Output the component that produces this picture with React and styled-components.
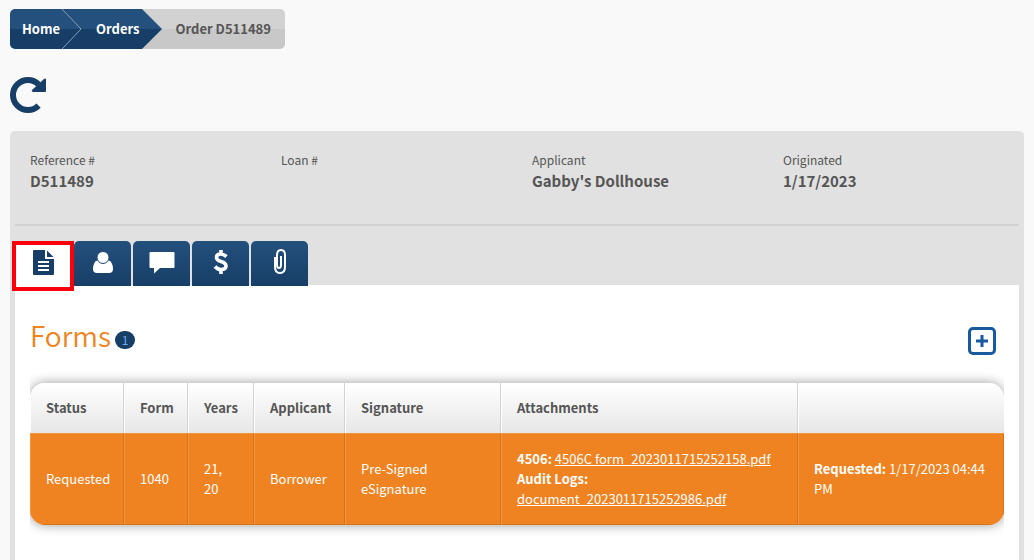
import * as React from 'react';
import styled, {createGlobalStyle} from 'styled-components';

const NAVY = '#173e66';
const ORANGE = '#ef8321';

const tabs = [
    {
        id: 'forms',
        label: 'Forms',
        icon: <path fillRule="evenodd" d="M5 1h11v9h9v15q0 1-1 1H5q-1 0-1-1V2q0-1 1-1zM18 1.500l6.500 6.500h-6.500zM9 12v2h11v-2zM9 16v2h11v-2zM9 20v2h11v-2z"/>,
    },
    {
        id: 'applicant',
        label: 'Applicant',
        icon: (
            <>
                <path d="M9 11h10q5 2 5 9q0 4-4 4H8q-4 0-4-4q0-7 5-9z"/>
                <circle cx="14" cy="8.500" r="6" stroke="#1e4973"/>
            </>
        ),
    },
    {
        id: 'comments',
        label: 'Comments',
        icon: <path d="M2.500 3h23q1 0 1 1v14q0 1-1 1H12l-6 5.500V19H2.500q-1 0-1-1V4q0-1 1-1z"/>,
    },
    {
        id: 'billing',
        label: 'Billing',
        icon: <path fill="none" stroke="currentColor" strokeWidth="3.600" d="M19.500 7.500q-3-2.500-6-2.500q-4 0-4 3.500q0 2.500 4.500 4q5 1.500 5 4.500q0 3.500-5 3.500q-3.500 0-6-3M14 1v4M14 20v5"/>,
    },
    {
        id: 'files',
        label: 'Files',
        icon: <path fill="none" stroke="currentColor" strokeWidth="2" d="M9 8v10q0 6 5 6t5-6V6q0-5-4-5t-4 5v10q0 3 2 3t2-3V7"/>,
    },
];

const details = [
    {label: 'Reference #', value: 'D511489'},
    {label: 'Loan #', value: ''},
    {label: 'Applicant', value: 'Gabby\'s Dollhouse'},
    {label: 'Originated', value: '1/17/2023'},
];

const columns = [
    {title: 'Status', width: 94},
    {title: 'Form', width: 64},
    {title: 'Years', width: 66},
    {title: 'Applicant', width: 91},
    {title: 'Signature', width: 156},
    {title: 'Attachments', width: 297},
    {title: '', width: 206},
];

const App = () => {

    const [activeTab, setActiveTab] = React.useState('forms');

    return (
        <Page>
            <GlobalStyle/>
            <Breadcrumbs aria-label="Breadcrumb">
                <Crumb href="#home">Home</Crumb>
                <Divider viewBox="0 0 20 40" aria-hidden="true">
                    <path d="M0 0L19 20L0 40" fill="none" stroke="#8b9fb3"/>
                </Divider>
                <Crumb href="#orders">Orders</Crumb>
                <Divider viewBox="0 0 20 40" aria-hidden="true">
                    <path d="M0 0H20V20z" fill="#d2d2d2"/>
                    <path d="M20 20V40H0z" fill="#c8c8c8"/>
                </Divider>
                <Current aria-current="page">Order D511489</Current>
            </Breadcrumbs>

            <Refresh type="button" aria-label="Refresh">
                <svg width="38" height="38" viewBox="0 0 38 38" aria-hidden="true">
                    <path d="M28.600 29.600A15 15 0 1 1 28.600 8.400" fill="none" stroke="currentColor" strokeWidth="6"/>
                    <path d="M36 3v12q0 1-1 1H23q-2-1-1-2L34 3q1-1 2 0z" fill="currentColor"/>
                </svg>
            </Refresh>

            <Panel>
                <Details>
                    {details.map(({label, value}) => (
                        <Detail key={label}>
                            <Label>{label}</Label>
                            <Value>{value}</Value>
                        </Detail>
                    ))}
                </Details>
                <Tabs role="tablist">
                    {tabs.map(({id, label, icon}) => (
                        <Tab
                            key={id}
                            type="button"
                            role="tab"
                            aria-label={label}
                            aria-selected={activeTab === id}
                            $active={activeTab === id}
                            onClick={() => setActiveTab(id)}
                        >
                            <svg width="28" height="28" viewBox="0 0 28 28" fill="currentColor" aria-hidden="true">{icon}</svg>
                        </Tab>
                    ))}
                </Tabs>
                <Content>
                    <Heading>
                        <Title>Forms</Title>
                        <Count>1</Count>
                        <Add type="button" aria-label="Add form">
                            <svg width="12" height="12" viewBox="0 0 12 12" aria-hidden="true">
                                <path d="M6 0v12M0 6h12" stroke="currentColor" strokeWidth="3"/>
                            </svg>
                        </Add>
                    </Heading>
                    <TableClip>
                        <Table>
                            <colgroup>
                                {columns.map(({title, width}) => (
                                    <col key={title} style={{width: `${width / 974 * 100}%`}}/>
                                ))}
                            </colgroup>
                            <thead>
                                <tr>
                                    {columns.map(({title}) => <Th key={title} scope="col">{title}</Th>)}
                                </tr>
                            </thead>
                            <tbody>
                                <tr>
                                    <Td>Requested</Td>
                                    <Td>1040</Td>
                                    <Td>21,<br/>20</Td>
                                    <Td>Borrower</Td>
                                    <Td>Pre-Signed<br/>eSignature</Td>
                                    <Td>
                                        <b>4506:</b> <FileLink href="#4506c">4506C form_2023011715252158.pdf</FileLink><br/>
                                        <b>Audit Logs:</b><br/>
                                        <FileLink href="#audit">document_2023011715252986.pdf</FileLink>
                                    </Td>
                                    <Td><b>Requested:</b> 1/17/2023 04:44 PM</Td>
                                </tr>
                            </tbody>
                        </Table>
                    </TableClip>
                </Content>
            </Panel>
        </Page>
    );
};

const GlobalStyle = createGlobalStyle`
  * {
    box-sizing: border-box;
  }
  body {
    margin: 0;
    background: #f9f9f9;
    color: #555555;
    font-family: "Noto Sans CJK SC", "Open Sans", sans-serif;
    font-size: 13px;
    line-height: 20px;
  }
  button {
    padding: 0;
    border: 0;
    background: none;
    font: inherit;
    cursor: pointer;
  }
`;

const Page = styled.main`
  display: flex;
  flex-direction: column;
  align-items: flex-start;
  min-height: 100vh;
  padding: 9px 10px 0;
`;

const Breadcrumbs = styled.nav`
  display: flex;
  height: 40px;
  border-radius: 5px;
  overflow: hidden;
  font-weight: 700;
  line-height: 40px;
`;

const Crumb = styled.a`
  padding: 0 2px 0 14px;
  background: linear-gradient(#24507d 50%, ${NAVY} 50%);
  color: #ffffff;
  text-decoration: none;

  &:first-child {
    padding-left: 12px;
  }
`;

const Divider = styled.svg`
  width: 20px;
  height: 40px;
  background: linear-gradient(#24507d 50%, ${NAVY} 50%);
`;

const Current = styled.span`
  padding: 0 14px;
  background: linear-gradient(#d2d2d2 50%, #c8c8c8 50%);
`;

const Refresh = styled.button`
  height: 38px;
  margin: 27px 0 17px;
  color: ${NAVY};

  svg {
    display: block;
  }
`;

const Panel = styled.section`
  display: flex;
  flex: 1;
  flex-direction: column;
  width: 100%;
  padding: 0 5px;
  border-radius: 5px 5px 0 0;
  background: #e1e1e1;
`;

const Details = styled.div`
  display: grid;
  grid-template-columns: repeat(4, 1fr);
  height: 95px;
  padding-top: 20px;
  border-bottom: 2px solid #d2d2d2;
`;

const Detail = styled.div`
  padding-left: 15px;
`;

const Label = styled.div`
  font-size: 12px;
  line-height: 18px;
`;

const Value = styled.div`
  font-size: 15px;
  font-weight: 700;
  line-height: 24px;
`;

const Tabs = styled.div`
  z-index: 1;
  display: flex;
  align-items: flex-start;
  gap: 2px;
  height: 59px;
  margin-left: -3px;
  padding-top: 15px;
`;

const Tab = styled.button`
  display: flex;
  justify-content: center;
  width: 57px;
  height: 45px;
  padding-top: 8px;
  border-radius: 5px 5px 0 0;
  background: linear-gradient(#24507d, ${NAVY});
  color: #ffffff;

  ${({$active}) => $active && `
    z-index: 1;
    width: 62px;
    height: 50px;
    margin-right: -2px;
    padding-top: 4px;
    border: 4px solid #f9000b;
    border-radius: 0;
    background: #ffffff;
    color: ${NAVY};
  `}
`;

const Content = styled.div`
  flex: 1;
  padding: 36px 15px 0;
  background: #ffffff;
`;

const Heading = styled.div`
  display: flex;
  align-items: center;
  gap: 4px;
  height: 40px;
  padding-right: 8px;
`;

const Title = styled.h1`
  margin: 0;
  padding-bottom: 12px;
  color: ${ORANGE};
  font-size: 28px;
  font-weight: 350;
  line-height: 28px;
`;

const Count = styled.span`
  width: 20px;
  height: 18px;
  margin-bottom: 2px;
  border-radius: 9px;
  background: ${NAVY};
  color: #69aeea;
  font-size: 12px;
  line-height: 18px;
  text-align: center;
`;

const Add = styled.button`
  display: flex;
  align-items: center;
  justify-content: center;
  width: 28px;
  height: 28px;
  margin-left: auto;
  border: 3px solid #185a9d;
  border-radius: 5px;
  color: #185a9d;
`;

/* keeps the table shadow from showing at the left and right edges */
const TableClip = styled.div`
  padding: 22px 0;
  overflow: hidden;
`;

const Table = styled.table`
  width: 100%;
  border-spacing: 0;
  border-radius: 15px;
  overflow: hidden;
  box-shadow: 0 0 12px rgba(0, 0, 0, 0.4);
  table-layout: fixed;
`;

const Th = styled.th`
  height: 50px;
  padding: 0 15px;
  border-right: 1px solid #d2d2d2;
  border-left: 1px solid #ffffff;
  background: linear-gradient(#ffffff, #e6e6e6);
  text-align: left;

  &:last-child {
    border-right: 0;
  }
`;

const Td = styled.td`
  height: 92px;
  padding: 0 15px;
  border: 1px solid;
  border-color: #f3943f #d87418 #d87418 #f3943f;
  background: ${ORANGE};
  color: #ffffff;
`;

const FileLink = styled.a`
  color: #ffffff;
`;

export default App;
